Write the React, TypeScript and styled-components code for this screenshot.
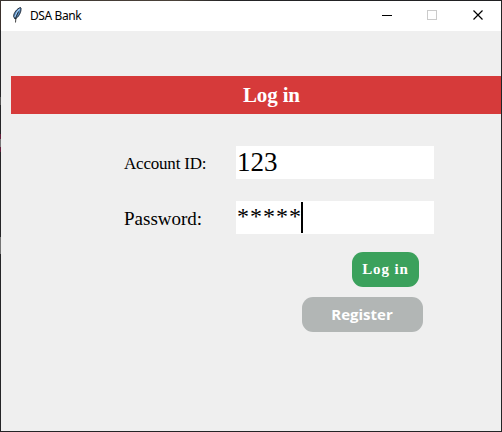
import React from 'react';
import styled, { createGlobalStyle } from 'styled-components';

const GlobalStyle = createGlobalStyle`
  *, *::before, *::after { box-sizing: border-box; }
  body { margin: 0; background: #242426; overflow: hidden; }
`;

const Frame = styled.div`
  width: 502px;
  height: 432px;
  padding: 1px;
  background:
    linear-gradient(90deg, #3a3431, #4b4239 35%, #242426 45%, #202022) 0 0 / 100% 1px no-repeat,
    linear-gradient(#3a302c 0 30px, #252527 30px 97px, #555 97px 105px, #252527 105px 134px,
      #64203c 134px 139px, #777 139px 147px, #64203c 147px 152px, #252527 152px 237px,
      #747474 237px 254px, #252527 254px) 0 0 / 1px 100% no-repeat,
    #242426;
`;

const Window = styled.main`
  height: 430px;
  background: #efefef;
  color: #000;
`;

const TitleBar = styled.header`
  display: flex;
  height: 30px;
  background: #fff;
`;

const AppIcon = styled.svg`
  flex: none;
  width: 16px;
  height: 16px;
  margin: 6px 0 0 8px;
`;

const Title = styled.span`
  flex: 1;
  margin-left: 5px;
  font: 12px/29px "Noto Sans", sans-serif;
  letter-spacing: -0.4px;
`;

const WindowControl = styled.button<{ $disabled?: boolean }>`
  display: grid;
  place-items: center;
  width: 45px;
  height: 29px;
  padding: 0;
  border: 0;
  background: transparent;
  color: ${({ $disabled }) => ($disabled ? '#cbcbcb' : '#000')};
`;

const Controls = styled.div`
  display: flex;
  gap: 1px;
`;

const Banner = styled.h1`
  height: 38px;
  margin: 45px 0 0 10px;
  padding-left: 232px;
  background: #d63a3a;
  color: #fff;
  font: bold 21px/38px "Liberation Serif", serif;
  letter-spacing: -0.15px;
`;

const Form = styled.form`
  display: grid;
  grid-template-columns: 112px 198px;
  grid-auto-rows: 33px;
  row-gap: 22px;
  margin: 32px 0 0 123px;
`;

const Label = styled.label<{ $size: number; $spacing: number }>`
  font: ${({ $size }) => $size}px/35px "Liberation Serif", serif;
  letter-spacing: ${({ $spacing }) => $spacing}px;
  white-space: nowrap;
`;

const Field = styled.div`
  display: flex;
  padding-left: 1px;
  background: #fff;
  font: 27px/33px "Liberation Serif", serif;
`;

const Mask = styled.span`
  width: 64px;
  font-size: 24px;
  line-height: 31px;
  letter-spacing: 1px;
  white-space: nowrap;
`;

const Caret = styled.span`
  width: 2px;
  height: 31px;
  margin-top: 1px;
  background: #000;
`;

const Actions = styled.div`
  display: flex;
  flex-direction: column;
  align-items: flex-end;
  gap: 10px;
  margin: 18px 78px 0 0;
`;

const ActionButton = styled.button`
  height: 35px;
  padding: 0;
  border: 0;
  border-radius: 11px;
  color: #fff;
`;

const LoginButton = styled(ActionButton)`
  width: 67px;
  margin-right: 4px;
  background: #3ba15c;
  font: bold 15px/35px "Liberation Serif", serif;
  letter-spacing: 0.9px;
`;

const RegisterButton = styled(ActionButton)`
  width: 121px;
  padding-right: 1px;
  background: #b2b6b5;
  font: bold 15px/35px "Open Sans", sans-serif;
`;

export default function App() {
  return (
    <>
      <GlobalStyle />
      <Frame>
        <Window>
          <TitleBar>
            <AppIcon viewBox="0 0 16 16" aria-hidden="true">
              <path d="M11.5 0.5C8 1.5 4.5 6 4.6 9.5L6 12C9.5 10.5 12.5 5 12 1Z" fill="#5689bd" stroke="#161d28" strokeWidth="0.9" />
              <path d="M10.6 2C8.5 4 6.8 7 6 10" fill="none" stroke="#a9cef3" strokeWidth="1.1" />
              <path d="M9.5 4.5L7 10L6.5 15.5" fill="none" stroke="#111" strokeWidth="0.8" />
            </AppIcon>
            <Title>DSA Bank</Title>
            <Controls>
              <WindowControl aria-label="Minimize">
                <svg width="11" height="11" shapeRendering="crispEdges"><path d="M1 5.5H11" stroke="currentColor" /></svg>
              </WindowControl>
              <WindowControl aria-label="Maximize" $disabled>
                <svg width="11" height="11"><rect x="0.5" y="0.5" width="9" height="9" fill="none" stroke="currentColor" /></svg>
              </WindowControl>
              <WindowControl aria-label="Close">
                <svg width="11" height="11"><path d="M0.5 0.5L9.5 9.5M9.5 0.5L0.5 9.5" stroke="currentColor" strokeWidth="1.2" /></svg>
              </WindowControl>
            </Controls>
          </TitleBar>
          <Banner>Log in</Banner>
          <Form onSubmit={(event) => event.preventDefault()}>
            <Label $size={17} $spacing={-0.2}>Account ID:</Label>
            <Field>123</Field>
            <Label $size={19} $spacing={0}>Password:</Label>
            <Field><Mask>*****</Mask><Caret /></Field>
          </Form>
          <Actions>
            <LoginButton type="button">Log in</LoginButton>
            <RegisterButton type="button">Register</RegisterButton>
          </Actions>
        </Window>
      </Frame>
    </>
  );
}
